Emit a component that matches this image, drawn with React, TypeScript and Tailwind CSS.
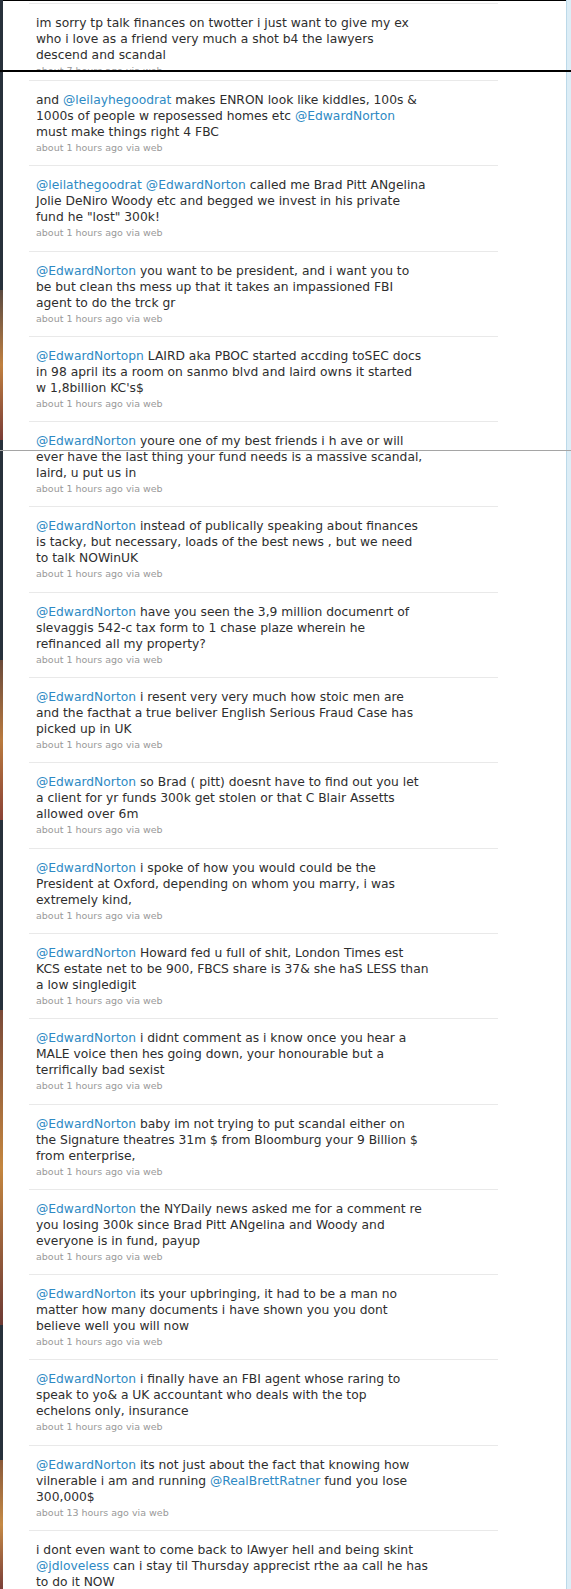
import React from 'react';

const tweets = [
  {
    lines: [
      'and @leilayhegoodrat makes ENRON look like kiddles, 100s &',
      '1000s of people w reposessed homes etc @EdwardNorton',
      'must make things right 4 FBC',
    ],
    meta: 'about 1 hours ago via web',
  },
  {
    lines: [
      '@leilathegoodrat @EdwardNorton called me Brad Pitt ANgelina',
      'Jolie DeNiro Woody etc and begged we invest in his private',
      'fund he "lost" 300k!',
    ],
    meta: 'about 1 hours ago via web',
  },
  {
    lines: [
      '@EdwardNorton you want to be president, and i want you to',
      'be but clean ths mess up that it takes an impassioned FBI',
      'agent to do the trck gr',
    ],
    meta: 'about 1 hours ago via web',
  },
  {
    lines: [
      '@EdwardNortopn LAIRD aka PBOC started accding toSEC docs',
      'in 98 april its a room on sanmo blvd and laird owns it started',
      "w 1,8billion KC's$",
    ],
    meta: 'about 1 hours ago via web',
  },
  {
    lines: [
      '@EdwardNorton youre one of my best friends i h ave or will',
      'ever have the last thing your fund needs is a massive scandal,',
      'laird, u put us in',
    ],
    meta: 'about 1 hours ago via web',
  },
  {
    lines: [
      '@EdwardNorton instead of publically speaking about finances',
      'is tacky, but necessary, loads of the best news , but we need',
      'to talk NOWinUK',
    ],
    meta: 'about 1 hours ago via web',
  },
  {
    lines: [
      '@EdwardNorton have you seen the 3,9 million documenrt of',
      'slevaggis 542-c tax form to 1 chase plaze wherein he',
      'refinanced all my property?',
    ],
    meta: 'about 1 hours ago via web',
  },
  {
    lines: [
      '@EdwardNorton i resent very very much how stoic men are',
      'and the facthat a true beliver English Serious Fraud Case has',
      'picked up in UK',
    ],
    meta: 'about 1 hours ago via web',
  },
  {
    lines: [
      '@EdwardNorton so Brad ( pitt) doesnt have to find out you let',
      'a client for yr funds 300k get stolen or that C Blair Assetts',
      'allowed over 6m',
    ],
    meta: 'about 1 hours ago via web',
  },
  {
    lines: [
      '@EdwardNorton i spoke of how you would could be the',
      'President at Oxford, depending on whom you marry, i was',
      'extremely kind,',
    ],
    meta: 'about 1 hours ago via web',
  },
  {
    lines: [
      '@EdwardNorton Howard fed u full of shit, London Times est',
      'KCS estate net to be 900, FBCS share is 37& she haS LESS than',
      'a low singledigit',
    ],
    meta: 'about 1 hours ago via web',
  },
  {
    lines: [
      '@EdwardNorton i didnt comment as i know once you hear a',
      'MALE voice then hes going down, your honourable but a',
      'terrifically bad sexist',
    ],
    meta: 'about 1 hours ago via web',
  },
  {
    lines: [
      '@EdwardNorton baby im not trying to put scandal either on',
      'the Signature theatres 31m $ from Bloomburg your 9 Billion $',
      'from enterprise,',
    ],
    meta: 'about 1 hours ago via web',
  },
  {
    lines: [
      '@EdwardNorton the NYDaily news asked me for a comment re',
      'you losing 300k since Brad Pitt ANgelina and Woody and',
      'everyone is in fund, payup',
    ],
    meta: 'about 1 hours ago via web',
  },
  {
    lines: [
      '@EdwardNorton its your upbringing, it had to be a man no',
      'matter how many documents i have shown you you dont',
      'believe well you will now',
    ],
    meta: 'about 1 hours ago via web',
  },
  {
    lines: [
      '@EdwardNorton i finally have an FBI agent whose raring to',
      'speak to yo& a UK accountant who deals with the top',
      'echelons only, insurance',
    ],
    meta: 'about 1 hours ago via web',
  },
  {
    lines: [
      '@EdwardNorton its not just about the fact that knowing how',
      'vilnerable i am and running @RealBrettRatner fund you lose',
      '300,000$',
    ],
    meta: 'about 13 hours ago via web',
  },
  {
    lines: [
      'i dont even want to come back to lAwyer hell and being skint',
      '@jdloveless can i stay til Thursday apprecist rthe aa call he has',
      'to do it NOW',
    ],
    meta: 'about 13 hours ago via web',
  },
];

function TweetLine({ text }: { text: string }) {
  const parts = text.split(/(@[A-Za-z0-9_]+)/);
  return (
    <div>
      {parts.map((p, i) =>
        p.startsWith('@') ? (
          <span key={i} className="text-[#2e8ac4]">
            {p}
          </span>
        ) : (
          <span key={i}>{p}</span>
        )
      )}
    </div>
  );
}

function Tweet({ lines, meta }: { lines: string[]; meta: string }) {
  return (
    <div className="ml-[26px] w-[469px] border-t border-[#e9e9e9] pl-[7px] pt-[11px] pb-[9.3px]">
      <div className="text-[12.3px] leading-[16px] text-[#2e2e2e] whitespace-nowrap">
        {lines.map((l, i) => (
          <TweetLine key={i} text={l} />
        ))}
      </div>
      <p className="text-[9.5px] leading-[16px] text-[#999] whitespace-nowrap">{meta}</p>
    </div>
  );
}

function RightEdge() {
  return (
    <div className="flex shrink-0">
      <div className="w-px bg-[#bcd9e9]" />
      <div className="w-[4px] bg-[#dcedf6]" />
    </div>
  );
}

export default function App() {
  return (
    <div className="relative w-[571px] h-[1589px] overflow-hidden bg-white font-['DejaVu_Sans',sans-serif]">
      {/* first clipped screenshot */}
      <div className="flex h-[70px]">
        <div className="w-[3px] shrink-0 bg-[#28313b]" />
        <div className="flex-1 border-t border-black overflow-hidden pt-[2px]">
          <Tweet
            lines={[
              'im sorry tp talk finances on twotter i just want to give my ex',
              'who i love as a friend very much a shot b4 the lawyers',
              'descend and scandal',
            ]}
            meta="about 7 hours ago via web"
          />
        </div>
        <RightEdge />
      </div>

      <div className="h-[2px] bg-black" />

      {/* second screenshot */}
      <div className="flex h-[1517px]">
        <div className="w-[3px] shrink-0 flex flex-col">
          <div className="h-[218px] bg-[#28313b]" />
          <div className="h-[150px] bg-linear-to-b from-[#5a4a40] via-[#c0803f] to-[#7a3d36]" />
          <div className="h-[220px] bg-[#28313b]" />
          <div className="h-[160px] bg-linear-to-b from-[#6a4a3a] via-[#b97a3e] to-[#8a4236]" />
          <div className="h-[190px] bg-[#28313b]" />
          <div className="h-[315px] bg-linear-to-b from-[#7a4a38] via-[#c4863f] to-[#6d3a34]" />
          <div className="h-[135px] bg-[#28313b]" />
          <div className="flex-1 bg-linear-to-b from-[#8a5a3a] via-[#c58a45] to-[#7a3f38]" />
        </div>
        <div className="flex-1 overflow-hidden pt-[8px]">
          {tweets.map((t, i) => (
            <Tweet key={i} lines={t.lines} meta={t.meta} />
          ))}
        </div>
        <RightEdge />
      </div>

      {/* seam where the screenshots were joined */}
      <div className="absolute left-0 right-0 top-[450px] h-px bg-[#a5a5a5]" />
    </div>
  );
}
